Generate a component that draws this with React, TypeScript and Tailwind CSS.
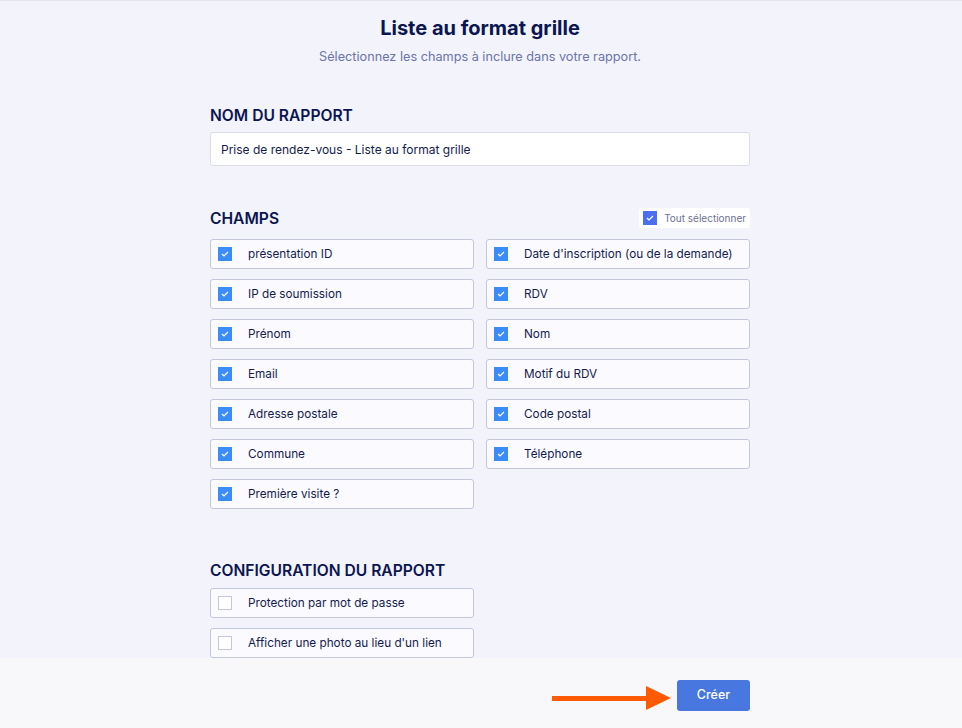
const left = [
  "présentation ID",
  "IP de soumission",
  "Prénom",
  "Email",
  "Adresse postale",
  "Commune",
  "Première visite ?",
];

const right = [
  "Date d'inscription (ou de la demande)",
  "RDV",
  "Nom",
  "Motif du RDV",
  "Code postal",
  "Téléphone",
];

function Check({ on, tone = "bg-[#3a8cf8]" }: { on: boolean; tone?: string }) {
  if (!on) {
    return <span className="w-[14px] h-[14px] shrink-0 border border-[#c3c7da] bg-white" />;
  }
  return (
    <span className={`w-[14px] h-[14px] shrink-0 flex items-center justify-center ${tone}`}>
      <svg width="8" height="6" viewBox="0 0 8 6" fill="none">
        <path d="M1 3l2 2 4-4" stroke="white" strokeWidth="1.2" />
      </svg>
    </span>
  );
}

function Field({ label, on = true }: { label: string; on?: boolean }) {
  return (
    <div className="h-[30px] flex items-center gap-[16px] pl-[7px] bg-[#fbfbff] border border-[#c3c7da] rounded-[3px] text-[11.75px] text-[#141a4d]">
      <Check on={on} />
      <span className="pt-[2px]">{label}</span>
    </div>
  );
}

export default function App() {
  // left and right columns interleaved row by row
  const rows: (string | null)[] = [];
  for (let i = 0; i < left.length; i++) {
    rows.push(left[i]);
    rows.push(right[i] ?? null);
  }

  return (
    <div
      className="w-[962px] h-[728px] flex flex-col bg-[#f3f3fc] border-t border-[#e6e2ea] overflow-hidden"
      style={{ fontFamily: "Inter, 'Noto Sans', sans-serif" }}
    >
      <div className="flex-1 overflow-hidden">
        <div className="w-[540px] ml-[210px] pt-[13px]">
          <h1 className="text-center text-[20px] leading-[28px] font-bold text-[#0a1551]">
            Liste au format grille
          </h1>
          <p className="text-center text-[12.7px] leading-[20px] mt-[5px] text-[#6c73a8]">
            Sélectionnez les champs à inclure dans votre rapport.
          </p>

          <h2 className="mt-[39px] text-[15.6px] leading-[20px] font-semibold text-[#0a1551]">
            NOM DU RAPPORT
          </h2>
          <div className="mt-[6px] h-[34px] flex items-center px-[10px] pt-[1px] bg-white border border-[#dcdde6] rounded-[3px] text-[12px] text-[#141a4d]">
            Prise de rendez-vous - Liste au format grille
          </div>

          <div className="mt-[42px] h-[20px] flex items-center justify-between">
            <h2 className="pt-[2px] text-[15.6px] leading-[20px] font-semibold text-[#0a1551]">CHAMPS</h2>
            <div className="h-[20px] flex items-center gap-[7px] px-[4px] bg-white rounded-[3px] text-[10px] text-[#6c7293]">
              <Check on tone="bg-[#4a6ff0]" />
              <span>Tout sélectionner</span>
            </div>
          </div>

          <div className="mt-[11px] grid grid-cols-2 gap-x-[12px] gap-y-[10px]">
            {rows.map((r, i) => (r ? <Field key={i} label={r} /> : <div key={i} />))}
          </div>

          <h2 className="mt-[52px] text-[15.6px] leading-[20px] font-semibold text-[#0a1551]">
            CONFIGURATION DU RAPPORT
          </h2>
          <div className="mt-[7px] grid grid-cols-2 gap-x-[12px] gap-y-[10px]">
            <Field label="Protection par mot de passe" on={false} />
            <div />
            <Field label="Afficher une photo au lieu d'un lien" on={false} />
            <div />
          </div>
        </div>
      </div>

      <div className="h-[70px] shrink-0 bg-[#f8f8fa]">
        <div className="w-[540px] ml-[210px] pt-[21px] flex justify-end items-center gap-[5px]">
          <svg width="120" height="26" viewBox="0 0 120 26" className="mt-[6px]">
            <rect x="0" y="11" width="96" height="5" fill="#ff5a00" />
            <polygon points="94,1 119,13 94,25" fill="#ff5a00" />
          </svg>
          <button className="w-[73px] h-[31px] rounded-[3px] bg-[#4877e0] text-white text-[12.5px] font-medium">
            Créer
          </button>
        </div>
      </div>
    </div>
  );
}
